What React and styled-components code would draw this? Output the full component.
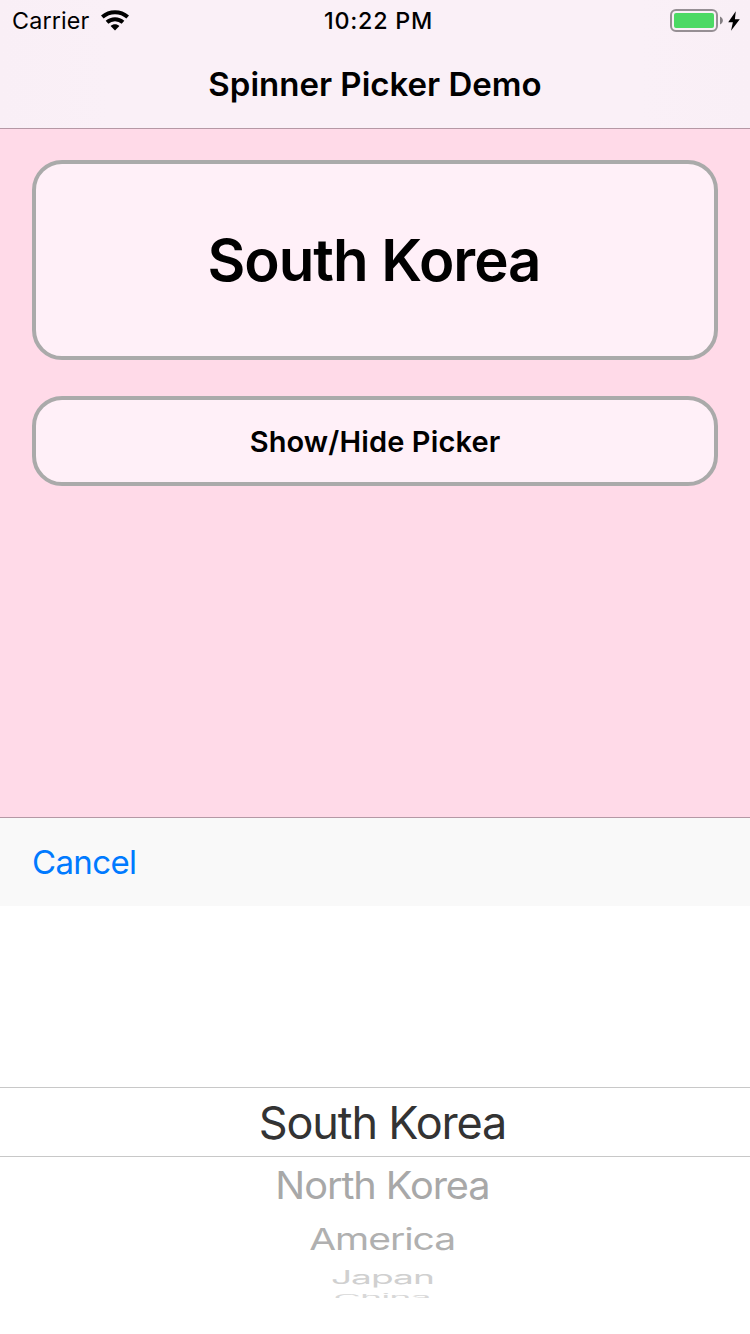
import React from "react";
import styled, { createGlobalStyle } from "styled-components";

const GlobalStyle = createGlobalStyle`
  * { box-sizing: border-box; }
  body { margin: 0; background: #fff; }
`;

const Screen = styled.div`
  width: 750px;
  height: 1334px;
  display: flex;
  flex-direction: column;
  overflow: hidden;
  background: #ffdae8;
  color: #000;
  font-family: Inter, "Liberation Sans", sans-serif;
`;

const Header = styled.header`
  height: 129px;
  flex: none;
  background: linear-gradient(90deg, #f9eff6 0, #faf0f7 110px, #faf0f7 640px, #f9eff6 100%);
  border-bottom: 1px solid #b598a5;
`;

const StatusBar = styled.div`
  height: 42px;
  display: grid;
  grid-template-columns: 1fr auto 1fr;
  align-items: center;
  padding: 0 10px 0 12px;
`;

const StatusGroup = styled.div`
  display: flex;
  align-items: center;
  justify-content: ${(p) => (p.$end ? "flex-end" : "flex-start")};
  gap: ${(p) => (p.$end ? 5 : 12)}px;
  padding-bottom: ${(p) => (p.$end ? 1 : 0)}px;
`;

const Label = styled.span`
  font-size: ${(p) => p.$size}px;
  font-weight: ${(p) => p.$weight || 400};
  letter-spacing: ${(p) => p.$track || 0}px;
  line-height: 1.2;
  white-space: nowrap;
`;

const Clock = styled(Label)`
  padding-left: 5px;
`;

const TitleBar = styled.div`
  height: 86px;
  display: flex;
  align-items: center;
  justify-content: center;
`;

const Content = styled.main`
  flex: 1;
  display: flex;
  flex-direction: column;
  gap: 36px;
  padding: 31px 32px 0;
`;

const Panel = styled.div`
  height: ${(p) => p.$height}px;
  display: flex;
  align-items: center;
  justify-content: center;
  padding: 2px 0 0;
  border: 4px solid #aaa;
  border-radius: 30px;
  background: #fff0f8;
  color: #000;
  font-family: inherit;
`;

const ResultPanel = styled(Panel)`
  padding-right: 2px;
`;

const Toolbar = styled.div`
  height: 89px;
  flex: none;
  display: flex;
  align-items: center;
  padding: 1px 32px 0;
  border-top: 1px solid #b598a5;
  background: #f9f9f9;
  color: #007aff;
`;

const Wheel = styled.div`
  height: 428px;
  flex: none;
  padding: 181px 0 0;
  background: #fff;
`;

const Row = styled.div`
  height: ${(p) => p.$height}px;
  display: flex;
  align-items: center;
  justify-content: center;
  padding-left: 15px;
  overflow: hidden;
  color: ${(p) => p.$color};
`;

const SelectedRow = styled(Row)`
  padding-top: 2px;
  border-top: 1px solid #c8c8c8;
  border-bottom: 1px solid #c8c8c8;
`;

const Tilted = styled(Label)`
  transform: translateY(${(p) => p.$shift || 0}px) scale(${(p) => p.$x}, ${(p) => p.$y});
`;

const WifiIcon = () => (
  <svg width="28" height="21" viewBox="0 0 28 21" fill="none">
    <path d="M1.3 7C8.6.6 19.4.6 26.7 7" stroke="#000" strokeWidth="4" />
    <path d="M6 12.3c4.6-4.1 11.4-4.1 16 0" stroke="#000" strokeWidth="4" />
    <path d="M9.6 16c2.5-2.4 6.3-2.4 8.8 0L14 20.6z" fill="#000" />
  </svg>
);

const BatteryIcon = () => (
  <svg width="53" height="23" viewBox="0 0 53 23">
    <rect x="1" y="1" width="46" height="21" rx="5" fill="none" stroke="#968f94" strokeWidth="2" />
    <rect x="4" y="4" width="40" height="15" rx="2" fill="#4cd964" />
    <path d="M50 7.5c3.8 1.4 3.8 6.6 0 8z" fill="#857f83" />
  </svg>
);

const BoltIcon = () => (
  <svg width="12" height="20" viewBox="0 0 12 20">
    <path d="M7.8.2.2 11.2h4.7L3 19.8l8.8-11.6H6.9z" fill="#000" />
  </svg>
);

const options = [
  { name: "North Korea", height: 57, color: "#a8a8a8", x: 0.882, y: 0.84, shift: 0 },
  { name: "America", height: 51, color: "#b0b0b0", x: 0.866, y: 0.66, shift: -0.7 },
  { name: "Japan", height: 28, color: "#d0d0d0", x: 0.825, y: 0.4, shift: -1.9 },
  { name: "China", height: 5, color: "#d8d8d8", x: 0.835, y: 0.21, shift: 1.5 },
];

export default function App() {
  return (
    <Screen>
      <GlobalStyle />
      <Header>
        <StatusBar>
          <StatusGroup>
            <Label $size={23.3} $track={0.15}>Carrier</Label>
            <WifiIcon />
          </StatusGroup>
          <Clock $size={23.3} $weight={500} $track={0.75}>10:22 PM</Clock>
          <StatusGroup $end>
            <BatteryIcon />
            <BoltIcon />
          </StatusGroup>
        </StatusBar>
        <TitleBar>
          <Label $size={33} $weight={600}>Spinner Picker Demo</Label>
        </TitleBar>
      </Header>
      <Content>
        <ResultPanel $height={200}>
          <Label $size={58.2} $weight={600} $track={-1}>South Korea</Label>
        </ResultPanel>
        <Panel as="button" $height={90}>
          <Label $size={29} $weight={600} $track={0.13}>Show/Hide Picker</Label>
        </Panel>
      </Content>
      <Toolbar>
        <Label $size={33} $track={-0.65}>Cancel</Label>
      </Toolbar>
      <Wheel>
        <SelectedRow $height={70} $color="#333">
          <Label $size={45} $track={-1.15}>South Korea</Label>
        </SelectedRow>
        {options.map((o) => (
          <Row key={o.name} $height={o.height} $color={o.color}>
            <Tilted $size={45} $track={-1.2} $x={o.x} $y={o.y} $shift={o.shift}>{o.name}</Tilted>
          </Row>
        ))}
      </Wheel>
    </Screen>
  );
}
